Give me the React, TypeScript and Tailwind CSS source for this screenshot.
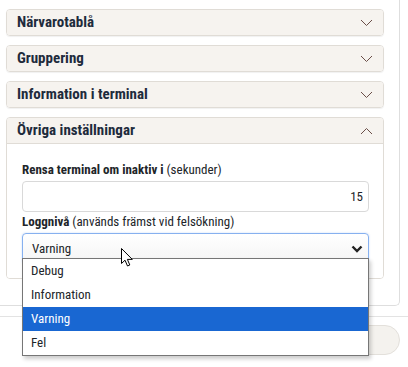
import React from "react";

const font = { fontFamily: "'Liberation Sans Narrow','Roboto Condensed','DejaVu Sans Condensed',sans-serif" };

function Chevron({ up }: { up?: boolean }) {
  return (
    <svg width="13" height="8" viewBox="0 0 13 8" className="shrink-0">
      <path d={up ? "M1 7L6.5 1.5L12 7" : "M1 1L6.5 6.5L12 1"} fill="none" stroke="#6a4e48" strokeWidth="1" />
    </svg>
  );
}

function Header({ title, up }: { title: string; up?: boolean }) {
  return (
    <div className="h-[25px] flex items-center justify-between pl-[10px] pr-[10px] bg-[#f6f3ef]">
      <span className="text-[15px] font-bold text-[#1e2b3c] leading-none">{title}</span>
      <Chevron up={up} />
    </div>
  );
}

export default function App() {
  return (
    <div className="relative w-[408px] h-[367px] bg-white overflow-hidden" style={font}>
      <div className="w-[400px] border-r border-b border-[#dedede] rounded-br-[5px] pt-[9px] pl-[6px] pr-[15px] pb-[26px]">
        {["Närvarotablå", "Gruppering", "Information i terminal"].map((t) => (
          <div key={t} className="mb-[9px] border border-[#e0dcd6] rounded-[4px] overflow-hidden shadow-[0_1px_1px_rgba(0,0,0,0.06)]">
            <Header title={t} />
          </div>
        ))}
        <div className="border border-[#e0dcd6] rounded-[4px] overflow-hidden">
          <div className="border-b border-[#e0dcd6]">
            <Header title="Övriga inställningar" up />
          </div>
          <div className="bg-white pt-[17px] pb-[14px] pl-[15px] pr-[14px]">
            <div className="h-[18px] flex items-center text-[13px] text-[#212529]">
              <span className="font-bold">Rensa terminal om inaktiv i</span>
              <span>&nbsp;(sekunder)</span>
            </div>
            <div className="mt-[2px] h-[31px] border border-[#d9d9d9] rounded-[4px] flex items-center justify-end pr-[5px] text-[13px] text-[#212529]">
              15
            </div>
            <div className="mt-[1px] h-[18px] flex items-center text-[13px] text-[#212529]">
              <span className="font-bold">Loggnivå</span>
              <span>&nbsp;(används främst vid felsökning)</span>
            </div>
            <div className="mt-[2px] h-[31px] border border-[#86b0ef] rounded-[4px] flex items-center justify-between pl-[9px] pr-[5px] text-[13px] text-[#212529] bg-gradient-to-b from-white to-[#f4f4f4] shadow-[0_0_2px_rgba(80,140,230,0.35)]">
              <span>Varning</span>
              <svg width="12" height="8" viewBox="0 0 12 8">
                <path d="M1.5 1.5L6 6L10.5 1.5" fill="none" stroke="#222" strokeWidth="2.4" />
              </svg>
            </div>
          </div>
        </div>
      </div>
      <div className="mt-[10px] border-t border-[#e3e3e3] flex justify-end pr-[8px] pt-[8px]">
        <button aria-label="Spara" className="h-[30px] w-[110px] rounded-full bg-[#f4f2ee] border border-[#e3e0db]" />
      </div>

      {/* open dropdown list */}
      <div className="absolute left-[22px] top-[258px] w-[347px] border border-[#767676] bg-white shadow-[2px_3px_4px_rgba(0,0,0,0.2)] text-[13px] text-[#212529]">
        {["Debug", "Information", "Varning", "Fel"].map((o) => (
          <div
            key={o}
            className={
              "h-[24px] flex items-center pl-[8px] " +
              (o === "Varning" ? "bg-[#1967d2] text-white" : "")
            }
          >
            {o}
          </div>
        ))}
      </div>

      {/* mouse cursor */}
      <svg className="absolute left-[121px] top-[248px]" width="13" height="20" viewBox="0 0 13 20">
        <path d="M0.5 0.5L0.5 15.5L4 12.2L6.5 18L8.8 17L6.4 11.4L11.3 11.4Z" fill="#fff" stroke="#000" strokeWidth="1" strokeLinejoin="round" />
      </svg>
    </div>
  );
}
